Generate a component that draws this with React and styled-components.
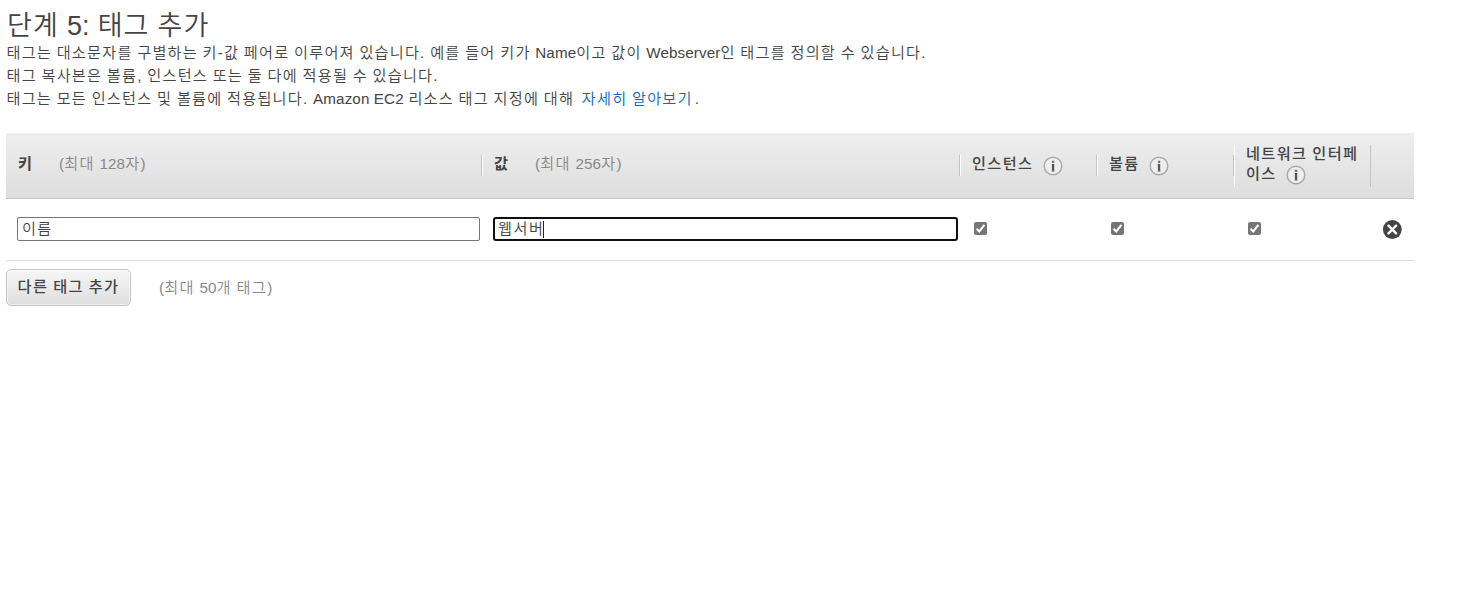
import React, { useState } from 'react';
import styled, { createGlobalStyle } from 'styled-components';

const GlobalStyle = createGlobalStyle`
    body {
        margin: 0;
        background-color: #fff;
        color: #444;
        font-family: 'Liberation Sans', 'Noto Sans CJK KR', sans-serif;
        font-size: 15.2px;
    }
    * {
        box-sizing: border-box;
    }
`;

const StyledPage = styled.div`
    width: 1414px;
    padding: 6px 0 0 6px;
`;

const StyledTitle = styled.h1`
    margin: 0;
    padding-left: 1px;
    height: 35px;
    line-height: 41px;
    font-size: 27px;
    font-weight: 350;
    letter-spacing: 1.1px;
    word-spacing: -0.6px;
    white-space: nowrap;
`;

const StyledLine = styled.p`
    margin: 0;
    height: 23px;
    padding-left: 0.5px;
    line-height: 23px;
    font-weight: 350;
    letter-spacing: 1.2px;
    word-spacing: -0.75px;
    white-space: nowrap;
`;

const StyledLatin = styled.span`
    letter-spacing: 0.12px;
    word-spacing: 0;
`;

const StyledLink = styled.a`
    margin: 0 2px 0 3px;
    color: #0f67bd;
    text-decoration: none;
`;

const StyledTable = styled.div`
    margin-top: 23px;
`;

const StyledRow = styled.div`
    display: grid;
    grid-template-columns: 476px 478px 137px 137px 137px 43px;
    align-items: center;
`;

const StyledHeader = styled(StyledRow)`
    height: 66px;
    background: linear-gradient(#eee, #dedede);
    border-bottom: 1px solid #c8c8c8;
`;

const StyledBody = styled(StyledRow)`
    height: 62px;
    padding-bottom: 1px;
    border-bottom: 1px solid #ddd;
`;

const StyledHeading = styled.div`
    height: ${({ $tall }) => ($tall ? 42 : 21)}px;
    padding-left: ${({ $first }) => ($first ? 12 : 11)}px;
    line-height: 20px;
    font-weight: 500;
    letter-spacing: 1.4px;
    word-spacing: -0.8px;
    white-space: nowrap;
    border-right: 1px solid #c4c4c4;
    border-left: ${({ $first }) => ($first ? 0 : 1)}px solid #fff;
`;

const StyledLabel = styled.span`
    display: block;
    margin-top: -1px;
`;

const StyledKeyName = styled.span`
    display: inline-block;
    width: 41px;
    font-weight: 700;
`;

const StyledHint = styled.span`
    color: #888;
    font-weight: 350;
    letter-spacing: 1.3px;
    word-spacing: -0.8px;
`;

const StyledInfo = styled.svg`
    width: 20px;
    height: 20px;
    margin-left: 9px;
    vertical-align: -6.5px;
`;

const StyledCell = styled.div`
    display: flex;
    align-items: center;
    padding-left: ${({ $pad }) => $pad}px;
`;

const StyledInput = styled.input`
    width: 463px;
    height: 24px;
    padding: 0 4px 4px;
    border: 1px solid #767676;
    border-radius: 2px;
    outline: none;
    color: #444;
    font-family: inherit;
    font-size: 15.2px;
    font-weight: 350;
    letter-spacing: 1.3px;
`;

const StyledFocusedField = styled.div`
    display: flex;
    align-items: center;
    width: 465px;
    height: 24px;
    padding: 0 0 4px 3px;
    border: 2px solid #101010;
    border-radius: 3px;
    font-weight: 350;
    letter-spacing: 1.5px;
    white-space: nowrap;
`;

const StyledCaret = styled.span`
    width: 1px;
    height: 17px;
    margin: 4px 0 0 -1px;
    background-color: #222;
`;

const StyledCheckbox = styled.button`
    display: flex;
    width: 13px;
    height: 13px;
    margin-bottom: 2px;
    padding: 0;
    border: 0;
    border-radius: 2px;
    background-color: #767676;
`;

const StyledRemove = styled.svg`
    width: 20px;
    height: 20px;
    margin-top: 1px;
`;

const StyledFooter = styled.div`
    display: flex;
    align-items: center;
    gap: 28px;
    margin-top: 8px;

    ${StyledHint} {
        padding-bottom: 4px;
    }
`;

const StyledButton = styled.button`
    width: 125px;
    height: 37px;
    padding: 0 0 5px;
    border: 1px solid #c4c4c4;
    border-radius: 5px;
    background: linear-gradient(#f6f6f6, #dedede);
    box-shadow: inset 0 0 0 1px rgba(255, 255, 255, 0.5);
    color: #444;
    font-family: inherit;
    font-size: 15.2px;
    font-weight: 500;
    letter-spacing: 1.4px;
    word-spacing: -0.8px;
    white-space: nowrap;
`;

function InfoIcon() {
    return (
        <StyledInfo viewBox='0 0 20 20'>
            <circle cx='10' cy='10' r='8.8' fill='#eee' stroke='#aaa' strokeWidth='1.5' />
            <rect x='8.9' y='4.8' width='2.3' height='2' fill='#666' />
            <rect x='8.9' y='8' width='2.3' height='7.6' fill='#555' />
            <path d='M8 8.4h1M8 15.2h4.2' stroke='#bbb' strokeWidth='0.6' />
        </StyledInfo>
    );
}

function RemoveIcon() {
    return (
        <StyledRemove viewBox='0 0 20 20'>
            <circle cx='10.3' cy='9.5' r='9.4' fill='#444' />
            <path d='M6.5 5.7l7.6 7.6M14.1 5.7l-7.6 7.6' stroke='#fff' strokeWidth='2.4' strokeLinecap='round' />
        </StyledRemove>
    );
}

function Checkbox() {
    const [checked, setChecked] = useState(true);
    return (
        <StyledCheckbox role='checkbox' aria-checked={checked} onClick={() => setChecked(!checked)}>
            {checked && (
                <svg width='13' height='13' viewBox='0 0 13 13'>
                    <path d='M2.5 6.7l2.8 2.7 5.1-6.6' fill='none' stroke='#fff' strokeWidth='2' />
                </svg>
            )}
        </StyledCheckbox>
    );
}

export default function App() {
    return (
        <StyledPage>
            <GlobalStyle />
            <StyledTitle>단계 <StyledLatin>5:</StyledLatin> 태그 추가</StyledTitle>
            <StyledLine>
                태그는 대소문자를 구별하는 키-값 페어로 이루어져 있습니다. 예를 들어 키가 <StyledLatin>Name</StyledLatin>이고 값이 <StyledLatin>Webserver</StyledLatin>인 태그를 정의할 수 있습니다.
            </StyledLine>
            <StyledLine>태그 복사본은 볼륨, 인스턴스 또는 둘 다에 적용될 수 있습니다.</StyledLine>
            <StyledLine>
                태그는 모든 인스턴스 및 볼륨에 적용됩니다. <StyledLatin>Amazon EC2</StyledLatin> 리소스 태그 지정에 대해 <StyledLink>자세히 알아보기</StyledLink>.
            </StyledLine>
            <StyledTable>
                <StyledHeader>
                    <StyledHeading $first>
                        <StyledLabel>
                            <StyledKeyName>키</StyledKeyName>
                            <StyledHint><StyledLatin>(</StyledLatin>최대 <StyledLatin>128</StyledLatin>자)</StyledHint>
                        </StyledLabel>
                    </StyledHeading>
                    <StyledHeading>
                        <StyledLabel>
                            <StyledKeyName>값</StyledKeyName>
                            <StyledHint><StyledLatin>(</StyledLatin>최대 <StyledLatin>256</StyledLatin>자)</StyledHint>
                        </StyledLabel>
                    </StyledHeading>
                    <StyledHeading><StyledLabel>인스턴스<InfoIcon /></StyledLabel></StyledHeading>
                    <StyledHeading><StyledLabel>볼륨<InfoIcon /></StyledLabel></StyledHeading>
                    <StyledHeading $tall><StyledLabel>네트워크 인터페<br />이스<InfoIcon /></StyledLabel></StyledHeading>
                </StyledHeader>
                <StyledBody>
                    <StyledCell $pad={11}><StyledInput defaultValue='이름' /></StyledCell>
                    <StyledCell $pad={11}><StyledFocusedField>웹서버<StyledCaret /></StyledFocusedField></StyledCell>
                    <StyledCell $pad={14}><Checkbox /></StyledCell>
                    <StyledCell $pad={14}><Checkbox /></StyledCell>
                    <StyledCell $pad={14}><Checkbox /></StyledCell>
                    <StyledCell $pad={11}><RemoveIcon /></StyledCell>
                </StyledBody>
            </StyledTable>
            <StyledFooter>
                <StyledButton>다른 태그 추가</StyledButton>
                <StyledHint><StyledLatin>(</StyledLatin>최대 <StyledLatin>50</StyledLatin>개 태그)</StyledHint>
            </StyledFooter>
        </StyledPage>
    );
}
